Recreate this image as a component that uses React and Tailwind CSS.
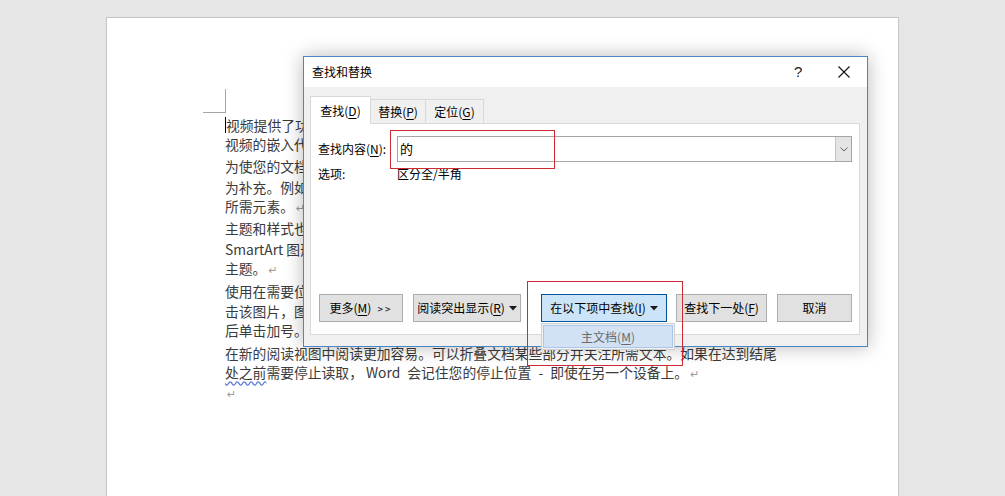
import React from "react";

const Mark = () => <span className="text-[#9a9a9a] text-[11px] ml-[2px] font-['DejaVu_Sans',sans-serif]">↵</span>;

const U = ({ children }) => <span className="underline underline-offset-2">{children}</span>;

function DocText() {
  const lines = [
    <>视频提供了功能强大的方法帮助您证明您的观点。当您单击联机视频时，可以在想要添加的</>,
    <>视频的嵌入代码中进行粘贴。您也可以键入一个关键字以联机搜索最适合您的文档的视频。<Mark /></>,
    <>为使您的文档具有专业外观，Word 提供了页眉、页脚、封面和文本框设计，这些设计可互</>,
    <>为补充。例如，您可以添加匹配的封面、页眉和提要栏。单击“插入”，然后从不同库中选择</>,
    <>所需元素。<Mark /></>,
    <>主题和样式也有助于文档保持协调。当您单击设计并选择新的主题时，图片、图表或</>,
    <>SmartArt 图形将会更改以匹配新的主题。当应用样式时，您的标题会进行更改以匹配新的</>,
    <>主题。<Mark /></>,
    <>使用在需要位置出现的新按钮在 Word 中保存时间。若要更改图片适应文档的方式，请单</>,
    <>击该图片，图片旁边将会显示布局选项按钮。当处理表格时，单击要添加行或列的位置，然</>,
    <>后单击加号。<Mark /></>,
    <>在新的阅读视图中阅读更加容易。可以折叠文档某些部分并关注所需文本。如果在达到结尾</>,
    <>
      <span className="underline decoration-wavy decoration-[#5a78d6] underline-offset-[3px]">处之前</span>需要停止读取，<span className="ml-[3px] mr-[7px]">Word</span>会记住您的停止位置<span className="mx-[7px]">-</span>即使在另一个设备上。<Mark />
    </>,
    <><Mark /></>,
  ];
  return (
    <div className="ml-[118px] mt-[2px] text-[13.8px] leading-[20.7px] text-[#3a3a3a] font-['Noto_Sans_CJK_SC',sans-serif]">
      {lines.map((l, i) => (
        <div key={i} className="whitespace-nowrap flex items-center h-[20.7px]">
          {i === 0 && <span className="inline-block w-px h-[16px] bg-black" />}
          <span>{l}</span>
        </div>
      ))}
    </div>
  );
}

const Btn = ({ w, ml, children, blue }) => (
  <div
    className={
      "h-[28px] flex items-center justify-center text-[12px] text-black border " +
      (blue ? "bg-[#cce4f7] border-[#005499]" : "bg-[#e1e1e1] border-[#adadad]")
    }
    style={{ width: w, marginLeft: ml }}
  >
    {children}
  </div>
);

const Tri = () => (
  <svg width="8" height="5" viewBox="0 0 8 5" className="ml-[4px]">
    <path d="M0 0 L8 0 L4 4.5 Z" fill="#1a1a1a" />
  </svg>
);

function Dialog() {
  return (
    <div className="absolute left-[303px] top-[56px] w-[565px] h-[291px] border border-[#4a86c0] bg-[#f0f0f0] shadow-[0_0_18px_rgba(0,0,0,0.28)] font-['Noto_Sans_CJK_SC',sans-serif] text-black">
      <div className="h-[30px] bg-white flex items-center pl-[8px] relative">
        <span className="text-[12px]">查找和替换</span>
        <span className="absolute left-[490px] top-[5px] text-[15px] leading-[20px] font-['Liberation_Sans',sans-serif] text-[#222]">?</span>
        <svg className="absolute left-[534px] top-[9px]" width="12" height="12" viewBox="0 0 12 12">
          <path d="M0.5 0.5 L11.5 11.5 M11.5 0.5 L0.5 11.5" stroke="#111" strokeWidth="1.1" />
        </svg>
      </div>
      <div className="pl-[6px] pt-[9px]">
        <div className="flex items-end h-[27px] text-[12px]">
          <div className="relative z-10 w-[61px] h-[28px] mb-[-1px] bg-white border border-b-0 border-[#d9d9d9] flex items-center justify-center">
            查找(<U>D</U>)
          </div>
          <div className="w-[55px] h-[24px] border border-l-0 border-b-0 border-[#d9d9d9] flex items-center justify-center">
            替换(<U>P</U>)
          </div>
          <div className="w-[58px] h-[24px] border border-l-0 border-b-0 border-[#d9d9d9] flex items-center justify-center">
            定位(<U>G</U>)
          </div>
        </div>
        <div className="w-[550px] h-[212px] bg-white border border-[#d9d9d9] flex flex-col pl-[7px] text-[12px]">
          <div className="flex items-center mt-[12px]">
            <div className="w-[79px]">查找内容(<U>N</U>):</div>
            <div className="w-[455px] h-[26px] border border-[#a5a5a5] flex items-center">
              <span className="ml-[2px] flex-1 text-[13px]">的</span>
              <div className="w-[16px] h-[24px] bg-[#e5e5e5] border-l border-[#c4c4c4] flex items-center justify-center">
                <svg width="8" height="5" viewBox="0 0 8 5">
                  <path d="M0.5 0.5 L4 4 L7.5 0.5" stroke="#606060" fill="none" strokeWidth="1" />
                </svg>
              </div>
            </div>
          </div>
          <div className="flex items-center mt-[4px] h-[16px]">
            <div className="w-[79px]">选项:</div>
            <div>区分全/半角</div>
          </div>
          <div className="mt-auto mb-[12px] flex">
            <Btn w={84} ml={1}>更多(<U>M</U>)<span className="ml-[6px] text-[10px] tracking-[2px]">&gt;&gt;</span></Btn>
            <Btn w={108} ml={10}>阅读突出显示(<U>R</U>)<Tri /></Btn>
            <Btn w={126} ml={20} blue>在以下项中查找(<U>I</U>)<Tri /></Btn>
            <Btn w={91} ml={9}>查找下一处(<U>F</U>)</Btn>
            <Btn w={75} ml={10}>取消</Btn>
          </div>
        </div>
      </div>
    </div>
  );
}

export default function App() {
  return (
    <div className="w-[1005px] h-[496px] bg-[#e6e6e6] overflow-hidden relative">
      <div className="ml-[106px] mt-[17px] w-[793px] h-[500px] bg-white border border-[#c6c6c6] pt-[71px]">
        <div className="ml-[96px] w-[23px] h-[24px] border-r border-b border-[#a6a6a6]" />
        <DocText />
      </div>
      <Dialog />
      <div className="absolute left-[541px] top-[323px] w-[134px] h-[27px] bg-[#f2f2f2] border border-[#d0d0d0] p-[1px] font-['Noto_Sans_CJK_SC',sans-serif]">
        <div className="w-full h-full bg-[#d2e2f4] border border-[#aac6ea] flex items-center justify-center text-[12px] text-[#6a6a6a]">
          主文档(<U>M</U>)
        </div>
      </div>
      <div className="absolute left-[390px] top-[130px] w-[165px] h-[39px] border border-[#cc2b35]" />
      <div className="absolute left-[527px] top-[281px] w-[156px] h-[85px] border border-[#cc2b35]" />
    </div>
  );
}
